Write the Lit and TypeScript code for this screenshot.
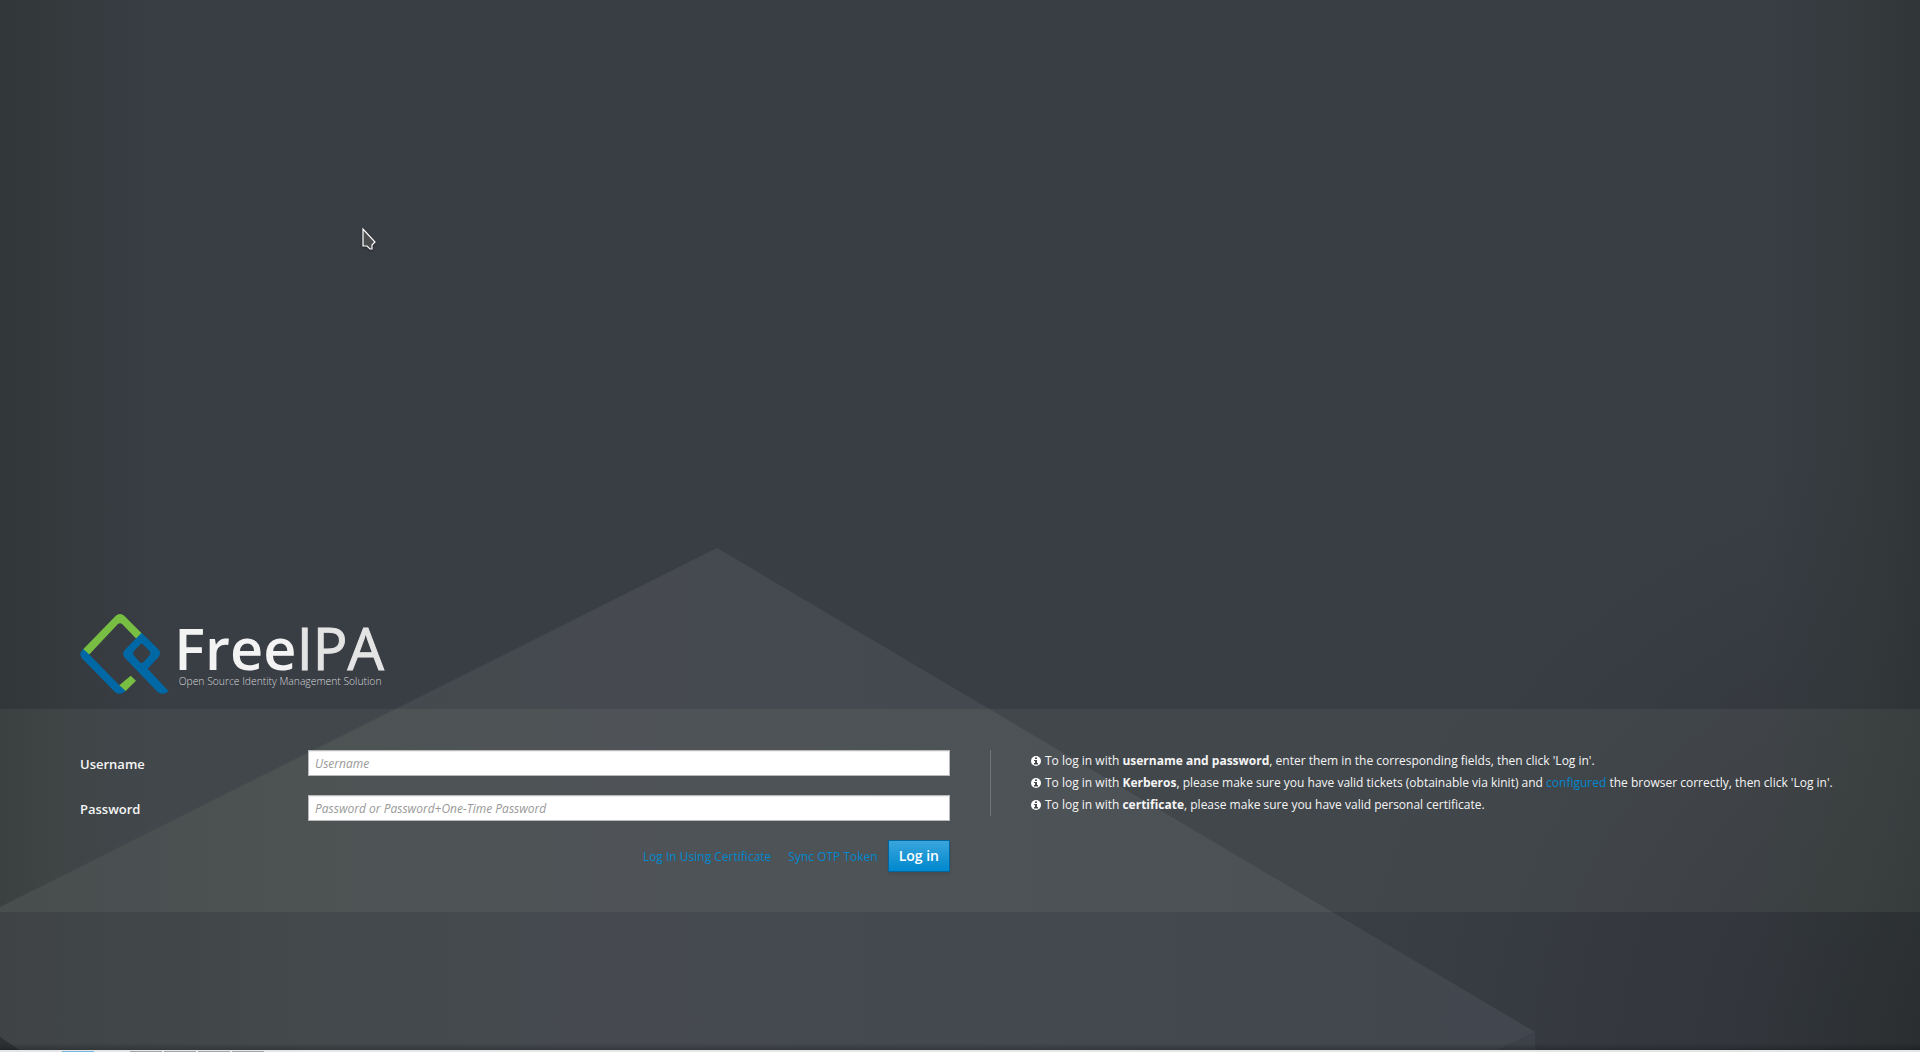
import { LitElement, html, css, svg } from "lit";
import { customElement } from "lit/decorators.js";

const infoIcon = html`<svg class="info" viewBox="0 0 20 20" aria-hidden="true">
  <circle cx="10" cy="10" r="10"></circle>
  <path d="M8 3h4v3H8zM6 8h6v6h2v3H6v-3h2v-4H6z"></path>
</svg>`;

const marks = svg`
  <path class="green" d="M68 149 166 49Q180 35 194 49L245 100 229 116 187 73Q180 66 173 73L87 164Z"/>
  <path class="blue" d="M70 147 87 163 178 256 197 273Q180 289 164 275L64 173Q55 160 70 147Z"/>
  <path class="green" d="M178 256 212 227 228 242 197 273Z"/>
  <path class="blue" fill-rule="evenodd" d="M245 98 295 148Q306 160 295 172L263 206 326 274Q308 288 293 276L195 174Q184 160 195 149ZM240 134 221 154Q216 160 221 166L239 186Q245 192 251 186L269 166Q274 160 269 154L250 134Q245 129 240 134Z"/>`;

@customElement("ipa-logo")
class IpaLogo extends LitElement {
  static styles = css`
    :host { display: block; }
    .logo { display: block; width: 302px; height: 82px; overflow: visible; font-family: "Open Sans", sans-serif; }
    .green { fill: #78be43; }
    .blue { fill: #0068a4; }
    .free { font-size: 173px; font-weight: 600; fill: #f3f3f4; }
    .ipa { font-size: 173px; fill: #e4e4e5; stroke: #e4e4e5; stroke-width: 3px; }
    .tag { font-size: 31px; font-weight: 300; fill: #d4d5d7; }
  `;
  render() {
    return html`<svg class="logo" viewBox="60 39 906 246" role="img" aria-label="FreeIPA">
      ${marks}
      <text class="free" x="343" y="209">Free</text>
      <text class="ipa" x="710" y="209">IPA</text>
      <text class="tag" x="356" y="255">Open Source Identity Management Solution</text>
    </svg>`;
  }
}

@customElement("login-backdrop")
class LoginBackdrop extends LitElement {
  static styles = css`
    :host { display: block; position: absolute; inset: 0; z-index: -1; overflow: hidden; }
    .art { display: block; width: 100%; height: 100%; }
  `;
  render() {
    return html`<svg class="art" viewBox="0 0 1920 1052" preserveAspectRatio="none" aria-hidden="true">
      <defs>
        <linearGradient id="sides">
          <stop offset="0" stop-color="#313638"></stop>
          <stop offset=".03" stop-color="#353a3d"></stop>
          <stop offset=".08" stop-color="#393d44"></stop>
          <stop offset=".92" stop-color="#393d44"></stop>
          <stop offset=".97" stop-color="#353a3d"></stop>
          <stop offset="1" stop-color="#303537"></stop>
        </linearGradient>
        <linearGradient id="peak" x1="0" y1="0" x2="1" y2="0">
          <stop offset="0" stop-color="#3f4346"></stop>
          <stop offset=".2" stop-color="#44494c"></stop>
          <stop offset=".4" stop-color="#464a50"></stop>
          <stop offset="1" stop-color="#42464e"></stop>
        </linearGradient>
        <radialGradient id="corner" gradientUnits="userSpaceOnUse" cx="1960" cy="1052" r="620">
          <stop offset="0" stop-color="#26292c" stop-opacity=".7"></stop>
          <stop offset="1" stop-color="#303538" stop-opacity="0"></stop>
        </radialGradient>
        <linearGradient id="foot" x1="0" y1="0" x2="0" y2="1">
          <stop offset="0" stop-color="#000" stop-opacity="0"></stop>
          <stop offset="1" stop-color="#000" stop-opacity=".3"></stop>
        </linearGradient>
      </defs>
      <rect width="1920" height="1052" fill="url(#sides)"></rect>
      <rect width="1920" height="1052" fill="url(#corner)"></rect>
      <path d="M717 548 1535 1032 1494 1052H22L0 1037V907Z" fill="url(#peak)"></path>
      <path d="M1535 1032V1052H1494Z" fill="#3d4149"></path>
      <path d="M0 1037 22 1052H0Z" fill="#2d3134"></path>
      <rect y="1043" width="1920" height="9" fill="url(#foot)"></rect>
    </svg>`;
  }
}

@customElement("app-root")
class AppRoot extends LitElement {
  static styles = css`
    :host { display: block; font: 12px/22px "Open Sans", sans-serif; color: #f5f5f5; }
    * { box-sizing: border-box; }
    .page { position: relative; z-index: 0; display: flex; flex-direction: column; min-height: 100vh; background: #393d45; }
    .top { flex: 1; display: flex; flex-direction: column; justify-content: flex-end; padding: 80px 80px 14px; }
    .band { display: grid; grid-template-columns: 910fr 930fr; padding: 41px 0 40px 80px; background: rgba(240, 255, 225, .055); align-items: start; }
    .form { display: grid; grid-template-columns: 228px 1fr; row-gap: 19px; padding-right: 40px; align-items: center; }
    .label { font-size: 13px; font-weight: 600; line-height: 28px; height: 26px; }
    .field { width: 100%; height: 26px; padding: 2px 6px; border: 1px solid #bababa; border-radius: 0; background: #fff; color: #333; font: 12px/18px "Open Sans", sans-serif; box-shadow: inset 0 1px 1px rgba(0, 0, 0, .075); }
    .field::placeholder { color: #999; font-style: italic; opacity: 1; }
    .actions { grid-column: 1 / -1; display: flex; justify-content: flex-end; align-items: center; line-height: 24px; }
    .link { color: #0088ce; text-decoration: none; }
    .actions .link { margin-right: 17px; padding-top: 2px; }
    .actions .sync { margin-right: 10px; }
    .submit { height: 32px; padding: 0 10px; border: 1px solid #00659c; border-radius: 0; background: linear-gradient(#39a5dc, #0088ce); box-shadow: 0 2px 3px rgba(3, 3, 3, .1); color: #fff; font: 600 14px/22px "Open Sans", sans-serif; }
    .help { min-height: 66px; padding-left: 40px; border-left: 1px solid #72767a; }
    .line { margin: 0; }
    .info { width: 10px; height: 10px; vertical-align: -1px; margin-right: 4px; }
    .info circle { fill: #fff; }
    .info path { fill: #43484b; }
    .below { height: 140px; display: flex; align-items: flex-end; }
    .tray { flex: 1; height: 2px; padding: 1px 0 0 62px; display: flex; gap: 2px; background: #e6e6e6; }
    .task { width: 32px; height: 1px; background: #a5a5a5; }
    .active { background: #72b9e2; margin-right: 34px; }
    .pointer { position: absolute; left: 361px; top: 227px; width: 16px; height: 24px; filter: drop-shadow(0 1px 1px rgba(0, 0, 0, .4)); }
  `;
  render() {
    return html`<div class="page">
      <login-backdrop></login-backdrop>
      <header class="top"><ipa-logo></ipa-logo></header>
      <main class="band">
        <form class="form" @submit=${(e: Event) => e.preventDefault()}>
          <label class="label" for="user">Username</label>
          <input class="field" id="user" type="text" placeholder="Username" autocomplete="username">
          <label class="label" for="pass">Password</label>
          <input class="field" id="pass" type="password" placeholder="Password or Password+One-Time Password">
          <div class="actions">
            <a class="link" href="#certificate">Log In Using Certificate</a>
            <a class="link sync" href="#sync">Sync OTP Token</a>
            <button class="submit" type="submit">Log in</button>
          </div>
        </form>
        <section class="help">
          <p class="line">${infoIcon}To log in with <strong>username and password</strong>, enter them in the corresponding fields, then click 'Log in'.</p>
          <p class="line">${infoIcon}To log in with <strong>Kerberos</strong>, please make sure you have valid tickets (obtainable via kinit) and <a class="link" href="#configured">configured</a> the browser correctly, then click 'Log in'.</p>
          <p class="line">${infoIcon}To log in with <strong>certificate</strong>, please make sure you have valid personal certificate.</p>
        </section>
      </main>
      <footer class="below"><div class="tray">
        <span class="task active"></span><span class="task"></span><span class="task"></span><span class="task"></span><span class="task"></span>
      </div></footer>
      <svg class="pointer" viewBox="0 0 16 24" aria-hidden="true">
        <path d="M2 2V19H6L9 22H11V18L14 15Z" fill="#4b4d4e" stroke="#fff" stroke-width="1.2"></path>
      </svg>
    </div>`;
  }
}
